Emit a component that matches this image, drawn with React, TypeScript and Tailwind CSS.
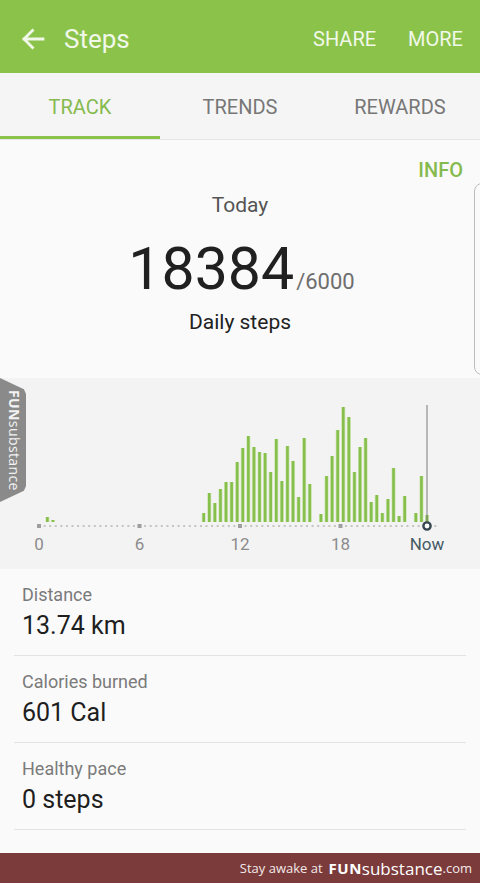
import React from "react";

const BARS: [number, number][] = [
  [1, 517], [2, 520],
  [29, 513], [30, 493], [31, 503], [32, 489], [33, 482], [34, 482], [35, 462], [36, 448],
  [37, 436], [38, 447], [39, 452], [40, 453], [41, 472], [42, 439], [43, 481], [44, 446],
  [45, 461], [46, 497], [47, 438], [48, 484], [50, 514], [51, 476], [52, 456], [53, 430],
  [54, 407], [55, 417], [56, 472], [57, 447], [58, 438], [59, 502], [60, 495], [61, 513],
  [62, 499], [63, 468], [64, 516], [65, 496], [67, 513], [68, 476], [69, 515],
];

const TOP = 378;
const X0 = 39;
const STEP = 5.583;

function Chart() {
  const dots = [];
  for (let i = 0; i <= 71; i++) {
    const x = X0 + i * STEP;
    const big = i % 18 === 0 && i <= 54;
    dots.push(
      big ? (
        <rect key={i} x={x - 2} y={148 - 2} width={4} height={4} fill="#9e9e9e" />
      ) : (
        <rect key={i} x={x - 1} y={148 - 1} width={2} height={2} fill="#c4c4c4" />
      )
    );
  }
  const nowX = 427;
  return (
    <svg width={480} height={192} className="block">
      {BARS.map(([i, top]) => {
        const cx = X0 + (i + 0.5) * STEP;
        return (
          <g key={i}>
            <rect x={cx - 2} y={top - TOP} width={4} height={522 - top} fill="#cfe6b5" />
            <rect x={cx - 1.3} y={top - TOP} width={2.6} height={522 - top} fill="#86bf4c" />
          </g>
        );
      })}
      <line x1={nowX} x2={nowX} y1={405 - TOP} y2={148} stroke="#7a7a7a" strokeWidth={1} />
      {dots}
      <circle cx={nowX} cy={148} r={3.6} fill="#ffffff" stroke="#37474f" strokeWidth={2.4} />
      <g fontFamily="Roboto, sans-serif" fontSize={17} textAnchor="middle">
        <text x={39} y={172} fill="#8c8c8c">0</text>
        <text x={139.5} y={172} fill="#8c8c8c">6</text>
        <text x={240} y={172} fill="#8c8c8c">12</text>
        <text x={340.5} y={172} fill="#8c8c8c">18</text>
        <text x={427} y={172} fill="#455a64">Now</text>
      </g>
    </svg>
  );
}

function StatRow({ label, value }: { label: string; value: string }) {
  return (
    <div className="mx-[14px] border-b border-[#e3e3e3] pt-[15px] pb-[14px] pl-2">
      <div className="text-[18px] leading-[22px] text-[#7a7a7a]">{label}</div>
      <div className="mt-[5px] text-[25px] leading-[30px] text-[#1e1e1e]">{value}</div>
    </div>
  );
}

export default function App() {
  return (
    <div
      className="relative w-[480px] h-[883px] overflow-hidden bg-[#fafafa] flex flex-col"
      style={{ fontFamily: "Roboto, 'Noto Sans', sans-serif" }}
    >
      {/* Header */}
      <div className="h-[73px] bg-[#8bc34a] flex items-center pt-1 pl-[21px] pr-[17px] text-[#f1f8e9]">
        <svg width={24} height={24} viewBox="0 0 24 24" className="shrink-0">
          <path
            d="M22 12H3M11.5 3.5L3 12l8.5 8.5"
            fill="none"
            stroke="#f1f8e9"
            strokeWidth={2.8}
            strokeLinecap="square"
          />
        </svg>
        <div className="ml-[19px] text-[26px] leading-none">Steps</div>
        <div className="ml-auto flex items-center gap-[32px] text-[20px] leading-none">
          <span>SHARE</span>
          <span>MORE</span>
        </div>
      </div>

      {/* Tabs */}
      <div className="h-[67px] bg-[#f5f5f5] flex border-b border-[#e6e6e6]">
        <div className="w-[160px] flex flex-col">
          <div className="flex-1 flex items-center justify-center pt-[5px] text-[20px] leading-[24px] text-[#86ba4e]">
            TRACK
          </div>
          <div className="h-[3px] bg-[#8bc34a]" />
        </div>
        <div className="w-[160px] flex items-center justify-center pt-[2px] text-[20px] leading-[24px] text-[#777777]">
          TRENDS
        </div>
        <div className="w-[160px] flex items-center justify-center pt-[2px] text-[20px] leading-[24px] text-[#777777]">
          REWARDS
        </div>
      </div>

      {/* Summary card */}
      <div className="h-[238px] bg-[#fafafa] flex flex-col pt-[18px]">
        <div className="flex justify-end pr-[17px]">
          <span className="text-[20px] leading-[24px] font-medium text-[#86ba4e]">INFO</span>
        </div>
        <div className="mt-[10px] text-center text-[21px] leading-[26px] text-[#555555]">Today</div>
        <div className="mt-[21px] flex items-baseline justify-center pl-[3px]">
          <span className="text-[59px] leading-none text-[#202020]">18384</span>
          <span className="ml-[2px] text-[22px] leading-none text-[#6e6e6e]">/6000</span>
        </div>
        <div className="mt-[11px] text-center text-[21px] leading-[26px] text-[#222222]">Daily steps</div>
      </div>

      {/* Chart */}
      <div className="h-[191px] bg-[#f3f3f3]">
        <Chart />
      </div>

      {/* Stats */}
      <div className="flex-1 bg-[#fafafa]">
        <StatRow label="Distance" value="13.74 km" />
        <StatRow label="Calories burned" value="601 Cal" />
        <StatRow label="Healthy pace" value="0 steps" />
      </div>

      {/* Footer */}
      <div
        className="h-[30px] bg-[#7b3b3b] flex items-center justify-end pr-[8px] text-white"
        style={{ fontFamily: "'Open Sans', sans-serif" }}
      >
        <span className="text-[13px] leading-none text-[#f3e9e9]">Stay awake at</span>
        <span className="ml-[6px] text-[15px] leading-none font-bold tracking-[0.5px]">FUN</span>
        <span className="text-[17px] leading-none">substance</span>
        <span className="text-[13px] leading-none text-[#f3e9e9]">.com</span>
      </div>

      {/* Right edge handle */}
      <div className="absolute right-[-10px] top-[183px] w-[16px] h-[192px] rounded-[10px] border border-[#bdbdbd]" />

      {/* Left watermark tab */}
      <div
        className="absolute left-0 top-[378px] w-[26px] h-[124px] bg-[#8a8a8a] flex items-center justify-center"
        style={{ clipPath: "polygon(0 0, 92% 9%, 100% 13%, 100% 87%, 92% 91%, 0 100%)" }}
      >
        <span
          className="[writing-mode:vertical-rl] text-[14px] leading-none text-[#f2f2f2] ml-[1px] tracking-[0.4px]"
          style={{ fontFamily: "'Open Sans', sans-serif" }}
        >
          <span className="font-bold">FUN</span>substance
        </span>
      </div>
    </div>
  );
}
